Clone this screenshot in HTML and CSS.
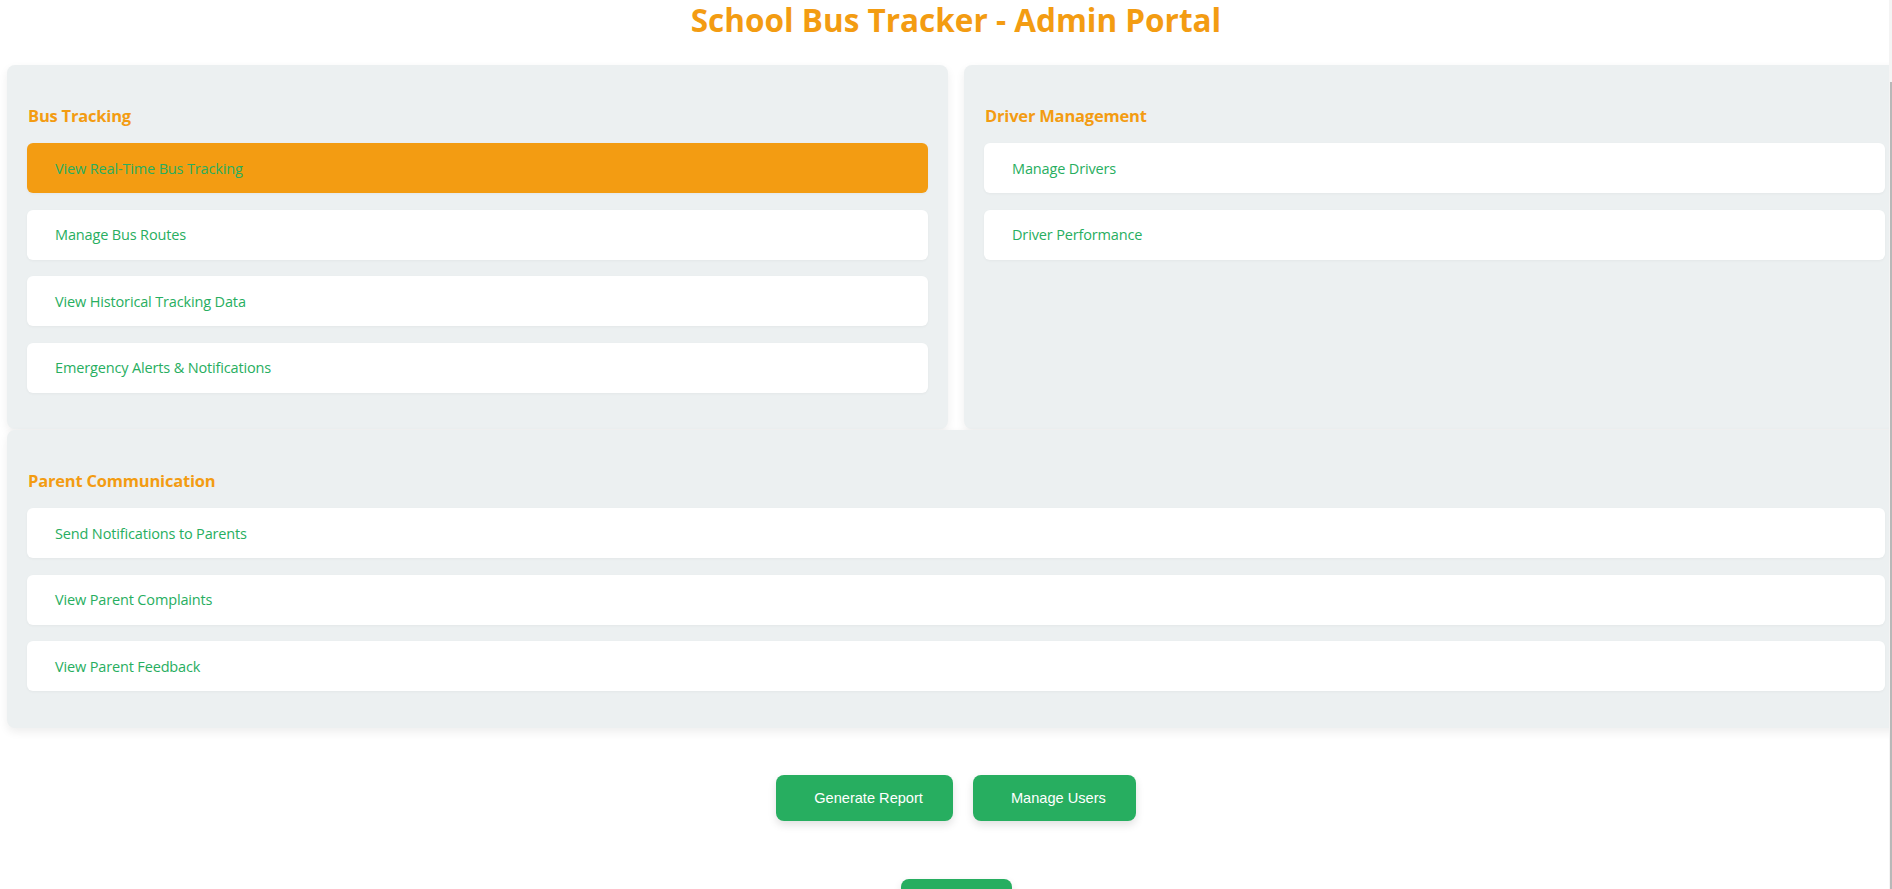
FILE: index.html
```html
<!DOCTYPE html>
<html lang="en">
<head>
<meta charset="utf-8">
<title>School Bus Tracker - Admin Portal</title>
<link rel="stylesheet" href="styles.css">
</head>
<body>
<div class="page">
  <h1 class="title">School Bus Tracker - Admin Portal</h1>
  <div class="sections">
    <section class="panel">
      <h3 class="panel-title">Bus Tracking</h3>
      <ul class="menu">
        <li><a class="item active" href="#">View Real-Time Bus Tracking</a></li>
        <li><a class="item" href="#">Manage Bus Routes</a></li>
        <li><a class="item" href="#">View Historical Tracking Data</a></li>
        <li><a class="item" href="#">Emergency Alerts &amp; Notifications</a></li>
      </ul>
    </section>
    <section class="panel">
      <h3 class="panel-title">Driver Management</h3>
      <ul class="menu">
        <li><a class="item" href="#">Manage Drivers</a></li>
        <li><a class="item" href="#">Driver Performance</a></li>
      </ul>
    </section>
    <section class="panel panel-wide">
      <h3 class="panel-title">Parent Communication</h3>
      <ul class="menu">
        <li><a class="item" href="#">Send Notifications to Parents</a></li>
        <li><a class="item" href="#">View Parent Complaints</a></li>
        <li><a class="item" href="#">View Parent Feedback</a></li>
      </ul>
    </section>
  </div>
  <div class="actions">
    <button class="btn" type="button">Generate Report</button>
    <button class="btn" type="button">Manage Users</button>
  </div>
  <div class="actions actions-bottom">
    <button class="btn btn-small" type="button">Logout</button>
  </div>
</div>
<div class="scrollbar"><div class="scrollbar-thumb"></div></div>
</body>
</html>
```

FILE: styles.css
```css
html, body {
  margin: 0;
  padding: 0;
  background: #ffffff;
  overflow-x: hidden;
}

body {
  font-family: "Open Sans", "Noto Sans", sans-serif;
}

.page {
  width: 1898px;
  margin-left: 7px;
}

.title {
  margin: 0 0 25px;
  height: 40px;
  line-height: 40px;
  text-align: center;
  color: #f39c12;
  font-size: 31.5px;
  font-weight: 700;
}

.sections {
  display: grid;
  grid-template-columns: 941px 941px;
  column-gap: 16px;
  row-gap: 1px;
}

.panel {
  background: #ecf0f1;
  border-radius: 8px;
  padding: 20px;
  box-shadow: 0 4px 10px rgba(0, 0, 0, 0.07);
}

.panel-wide {
  grid-column: 1 / 3;
}

.panel-title {
  margin: 18px 0 15px;
  padding-left: 1px;
  line-height: 25px;
  height: 25px;
  color: #f39c12;
  font-size: 16.5px;
  letter-spacing: -0.2px;
  font-weight: 700;
}

.menu {
  list-style: none;
  margin: 0;
  padding: 0;
}

.menu li {
  margin-bottom: 16.5px;
}

.item {
  display: flex;
  align-items: center;
  height: 50px;
  padding-left: 28px;
  background: #ffffff;
  border-radius: 6px;
  color: #27ae60;
  font-size: 14.5px;
  letter-spacing: -0.15px;
  text-decoration: none;
  box-shadow: 0 1px 3px rgba(0, 0, 0, 0.04);
}

.item.active {
  background: #f39c12;
}

.actions {
  display: flex;
  justify-content: center;
  gap: 20px;
  margin-top: 47px;
}

.actions-bottom {
  margin-top: 58px;
}

.btn {
  height: 46px;
  padding: 0 30px 0 38px;
  border: none;
  border-radius: 8px;
  background: #27ae60;
  color: #ffffff;
  font-family: "Liberation Sans", Arial, sans-serif;
  font-size: 14.6px;
  box-shadow: 0 4px 8px rgba(0, 0, 0, 0.12);
  cursor: pointer;
}

.btn-small {
  width: 111px;
  padding: 0;
}

.scrollbar {
  position: fixed;
  top: 0;
  right: 0;
  bottom: 0;
  width: 3px;
  background: #f4f4f4;
}

.scrollbar-thumb {
  margin-top: 82px;
  margin-left: 1px;
  height: calc(100% - 82px);
  background: #b8b8b8;
}
```
